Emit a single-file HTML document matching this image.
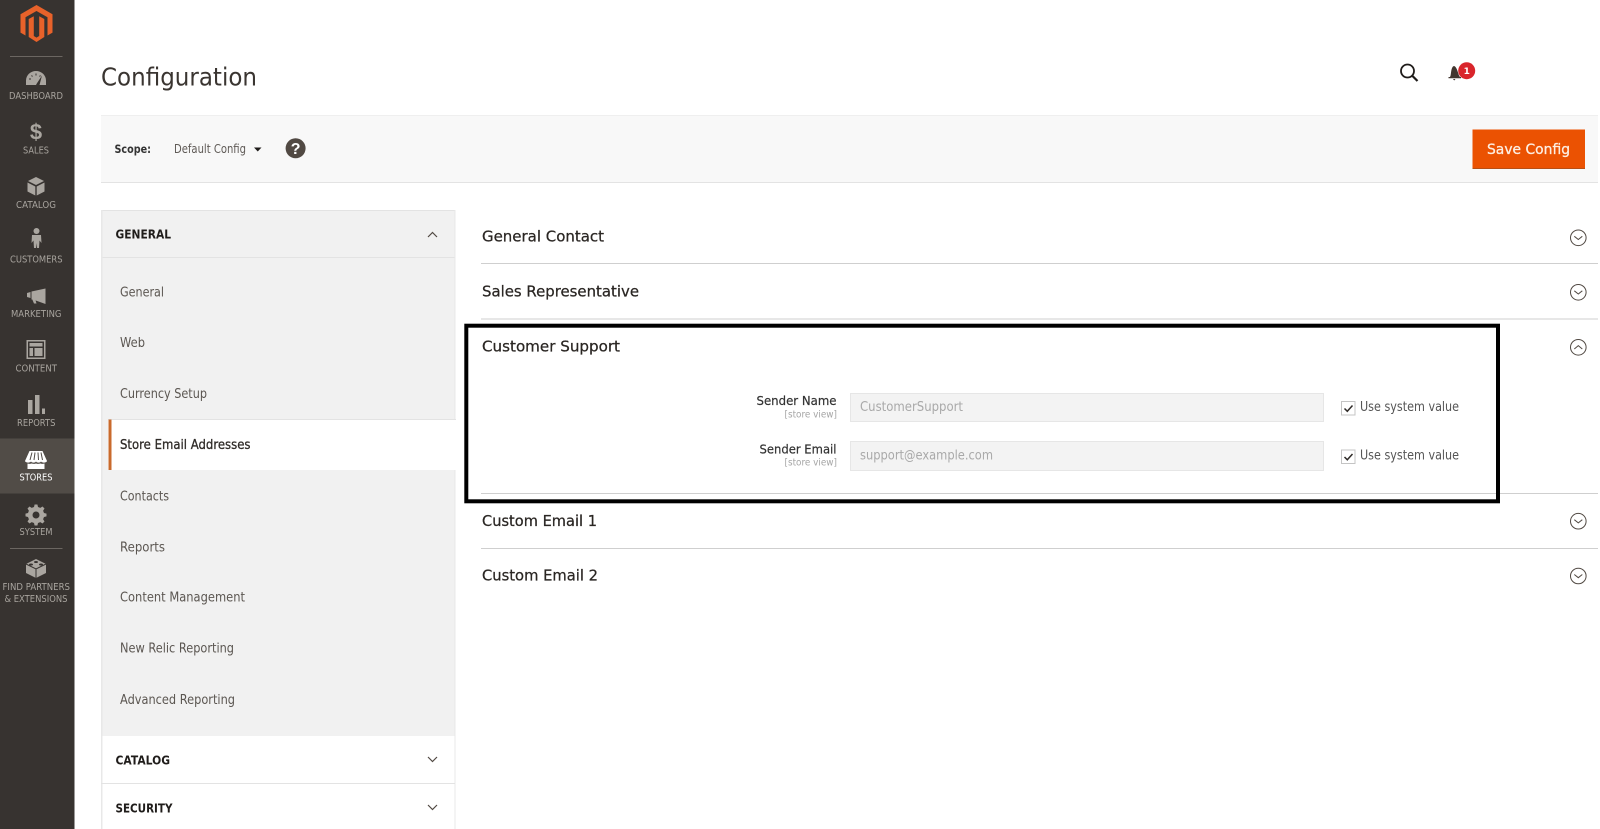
<!DOCTYPE html>
<html lang="en">
<head>
<meta charset="utf-8">
<title>Configuration</title>
<style>
html,body{margin:0;padding:0;background:#fff;overflow:hidden}
svg{display:block;filter:blur(.3px)}
text{font-family:"DejaVu Sans","Liberation Sans",sans-serif;white-space:pre}
.nav{font-size:10px;fill:#a8a49e;text-anchor:start}
.menu{font-size:13.5px;fill:#5b5651}
.head{font-size:12.5px;font-weight:700;fill:#1f1c1a}
.sec{font-size:15px;fill:#2a2623;stroke:#2a2623;stroke-width:.25px}
.lab{font-size:12.5px;fill:#333;stroke:#333;stroke-width:.2px}
.sv{font-size:9.5px;fill:#a5a5a5}
.ph{font-size:13px;fill:#a9a9a9}
.use{font-size:13px;fill:#555}
.ic{fill:#aaa6a0}
</style>
</head>
<body>
<svg xmlns="http://www.w3.org/2000/svg" width="1600" height="829" viewBox="0 0 1600 829">
<rect width="1600" height="829" fill="#fff"/>

<!-- Sidebar -->
<rect x="0" y="0" width="74.5" height="829" fill="#373330"/>
<rect x="0" y="438.5" width="74.5" height="55" fill="#514c47"/>
<rect x="10" y="56" width="52.500" height="1" fill="#6b6661"/>
<rect x="10" y="548" width="52.500" height="1" fill="#6b6661"/>

<!-- Logo -->
<path fill="#e8622a" d="M36.500 5 52.500 14.200V32.600L47.500 35.500V17.200L36.500 11 25.500 17.200V35.500L20.500 32.600V14.200Z"/>
<path fill="#e8622a" d="M28.700 19 33.800 16.200V36L36.500 37.600 39.200 36V16.200L44.300 19V37L36.500 42 28.700 37Z"/>

<!-- Dashboard -->
<path class="ic" d="M26 85V80.500A10 9.500 0 0 1 46 80.500V85H39.500L42 75.500 36.800 83.500 36 85Z"/>
<path d="M29 79h2M31.500 75.500l1 1M36 73.500v2M40.500 75.500l-1 1" stroke="#373330" stroke-width="1"/>
<text class="nav" x="9" y="99" textLength="54" lengthAdjust="spacingAndGlyphs">DASHBOARD</text>

<!-- Sales -->
<text x="36" y="139.500" text-anchor="middle" style="font-family:'Liberation Sans',sans-serif;font-size:22px;font-weight:700;fill:#aaa6a0">$</text>
<text class="nav" x="23" y="153.500" textLength="26" lengthAdjust="spacingAndGlyphs">SALES</text>

<!-- Catalog -->
<path class="ic" d="M36 177 44 181 36 185 28 181ZM27.500 182.500 35.300 186.500V195.500L27.500 191.500ZM44.500 182.500 36.700 186.500V195.500L44.500 191.500Z"/>
<text class="nav" x="16" y="208" textLength="40" lengthAdjust="spacingAndGlyphs">CATALOG</text>

<!-- Customers -->
<circle class="ic" cx="36.500" cy="231" r="3"/>
<path class="ic" d="M32 235H41L41.500 243 39.500 240.500 39 248H37L36.500 243 36 248H34L33.500 240.500 31.500 243Z"/>
<text class="nav" x="10" y="262.500" textLength="52.500" lengthAdjust="spacingAndGlyphs">CUSTOMERS</text>

<!-- Marketing -->
<path class="ic" d="M27 293 30.500 292V298L27 297ZM31.500 291.500 45.500 288.500V304L31.500 299V298.800L35.500 300.300 36.500 303.500H34L32.300 299.500H31.500Z"/>
<text class="nav" x="11" y="317" textLength="50.500" lengthAdjust="spacingAndGlyphs">MARKETING</text>

<!-- Content -->
<path fill-rule="evenodd" class="ic" d="M26.500 340H45.500V359H26.500ZM28 341.500V357.500H44V341.500Z"/>
<path class="ic" d="M29.500 343H42.500V346.500H29.500ZM29.500 348H33V356H29.500ZM34.500 348H42.500V356H34.500Z"/>
<text class="nav" x="15.500" y="371.500" textLength="41.500" lengthAdjust="spacingAndGlyphs">CONTENT</text>

<!-- Reports -->
<path class="ic" d="M28 400H32.500V414H28ZM35 395H39.500V414H35ZM42 408.500H45V414H42Z"/>
<text class="nav" x="17" y="426" textLength="38.500" lengthAdjust="spacingAndGlyphs">REPORTS</text>

<!-- Stores -->
<path fill="#fff" d="M29.500 451H42.500L47 461C46.500 463 42 463 41 461.500 40 463 37 463 36 461.500 35 463 32 463 31 461.500 30 463 25.500 463 25 461ZM27.500 463.500C29 464 30.500 464 31.500 463.500 33 464 35 464 36 463.500 37 464 39 464 40.500 463.500 41.500 464 43 464 44.500 463.500V469H27.500Z"/>
<path d="M32 452.500 30 460M35 452.500 34 460M38 452.500 38.500 460M41 452.500 42.500 460" stroke="#514c47" stroke-width="1"/>
<text class="nav" x="19.500" y="480.500" textLength="33" lengthAdjust="spacingAndGlyphs" style="fill:#fff">STORES</text>

<!-- System -->
<path class="ic" fill-rule="evenodd" d="M34.600 504.500H37.400L38 507 40.300 507.900 42.500 506.500 44.500 508.500 43.100 510.700 44 513 46.500 513.600V516.400L44 517 43.100 519.300 44.500 521.500 42.500 523.500 40.300 522.100 38 523 37.400 525.500H34.600L34 523 31.700 522.100 29.500 523.500 27.500 521.500 28.900 519.300 28 517 25.500 516.400V513.600L28 513 28.900 510.700 27.500 508.500 29.500 506.500 31.700 507.900 34 507ZM36 511.500A3.500 3.500 0 1 0 36 518.500 3.500 3.500 0 0 0 36 511.500Z"/>
<text class="nav" x="19.500" y="535" textLength="33" lengthAdjust="spacingAndGlyphs">SYSTEM</text>

<!-- Partners -->
<path class="ic" d="M36 559 46 564V573L36 578 26 573V564Z"/>
<path d="M26 564 36 569 46 564M36 569V578" stroke="#373330" stroke-width="1" fill="none"/>
<ellipse cx="36" cy="562" rx="2" ry="1" fill="#373330"/>
<ellipse cx="31" cy="564.500" rx="2" ry="1" fill="#373330"/>
<ellipse cx="41" cy="564.500" rx="2" ry="1" fill="#373330"/>
<text class="nav" x="2.500" y="590" textLength="67.500" lengthAdjust="spacingAndGlyphs">FIND PARTNERS</text>
<text class="nav" x="4.500" y="602" textLength="63" lengthAdjust="spacingAndGlyphs">&amp; EXTENSIONS</text>

<!-- Title -->
<text x="101" y="85.500" textLength="156" lengthAdjust="spacingAndGlyphs" style="font-size:25px;fill:#3a3531">Configuration</text>

<!-- Header actions -->
<circle cx="1407.500" cy="71" r="6.500" fill="none" stroke="#1f1c1a" stroke-width="1.800"/>
<path d="M1412.500 76 1417.500 81" stroke="#1f1c1a" stroke-width="2.200"/>
<path fill="#41362f" d="M1450 77C1451.500 75 1450.500 67 1454 66 1457.500 67 1458 75 1460 77ZM1448.500 77H1461V78.300H1448.500ZM1453 79H1455.500L1454.200 80.500Z"/>
<circle cx="1466.700" cy="70.700" r="8.500" fill="#d9252b"/>
<text x="1466.700" y="74" text-anchor="middle" style="font-size:9px;font-weight:700;fill:#fff">1</text>

<!-- Scope bar -->
<rect x="101" y="115" width="1497" height="67" fill="#f8f8f8"/>
<rect x="101" y="115" width="1497" height="1" fill="#efefef"/>
<rect x="101" y="182" width="1497" height="1" fill="#e3e3e3"/>
<text x="114.500" y="153" textLength="36.500" lengthAdjust="spacingAndGlyphs" style="font-size:11.500px;font-weight:700;fill:#333">Scope:</text>
<text x="174" y="153" textLength="72" lengthAdjust="spacingAndGlyphs" style="font-size:12px;fill:#5f5a56">Default Config</text>
<path d="M254 147.500H261.500L257.750 151.500Z" fill="#1f1c1a"/>
<circle cx="295.600" cy="148.300" r="10" fill="#514943"/>
<text x="295.600" y="154" text-anchor="middle" style="font-family:'Liberation Sans',sans-serif;font-size:16px;font-weight:700;fill:#fff">?</text>
<rect x="1472.500" y="129.500" width="112.500" height="39.500" fill="#eb5202"/>
<rect x="1472.500" y="168" width="112.500" height="1" fill="#b84f14"/>
<text x="1487" y="154" textLength="83" lengthAdjust="spacingAndGlyphs" style="font-size:14px;fill:#fdeee2;stroke:#fdeee2;stroke-width:.3px">Save Config</text>

<!-- Left panel -->
<rect x="101" y="210" width="354" height="526" fill="#f1f1f1"/>
<rect x="101" y="210" width="354" height="1" fill="#e3e3e3"/>
<rect x="101" y="257" width="354" height="1" fill="#e3e3e3"/>
<rect x="101" y="210" width="1.500" height="619" fill="#e8e8e8"/>
<rect x="454.500" y="210" width="1" height="619" fill="#e8e8e8"/>
<text class="head" x="115.500" y="238.700" textLength="55.500" lengthAdjust="spacingAndGlyphs">GENERAL</text>
<path d="M428 237 432.500 232.500 437 237" fill="none" stroke="#514943" stroke-width="1.200"/>

<rect x="108" y="419" width="348" height="51" fill="#fff"/>
<rect x="108" y="419" width="348" height="1" fill="#e3e3e3"/>
<rect x="108.500" y="419.500" width="3" height="50.500" fill="#c96a2c"/>

<text class="menu" x="120" y="296.500" textLength="44" lengthAdjust="spacingAndGlyphs">General</text>
<text class="menu" x="120" y="347" textLength="25" lengthAdjust="spacingAndGlyphs">Web</text>
<text class="menu" x="120" y="397.800" textLength="87" lengthAdjust="spacingAndGlyphs">Currency Setup</text>
<text class="menu" x="120" y="449" textLength="130.500" lengthAdjust="spacingAndGlyphs" style="fill:#2f2b28;stroke:#2f2b28;stroke-width:.3px">Store Email Addresses</text>
<text class="menu" x="120" y="500.500" textLength="49" lengthAdjust="spacingAndGlyphs">Contacts</text>
<text class="menu" x="120" y="551.500" textLength="45" lengthAdjust="spacingAndGlyphs">Reports</text>
<text class="menu" x="120" y="601.500" textLength="125" lengthAdjust="spacingAndGlyphs">Content Management</text>
<text class="menu" x="120" y="652.500" textLength="114" lengthAdjust="spacingAndGlyphs">New Relic Reporting</text>
<text class="menu" x="120" y="703.800" textLength="115" lengthAdjust="spacingAndGlyphs">Advanced Reporting</text>

<text class="head" x="115.500" y="764.500" textLength="54.500" lengthAdjust="spacingAndGlyphs">CATALOG</text>
<path d="M428 757 432.500 761.500 437 757" fill="none" stroke="#514943" stroke-width="1.200"/>
<rect x="101" y="783" width="354" height="1" fill="#e3e3e3"/>
<text class="head" x="115.500" y="812.500" textLength="57" lengthAdjust="spacingAndGlyphs">SECURITY</text>
<path d="M428 805 432.500 809.500 437 805" fill="none" stroke="#514943" stroke-width="1.200"/>

<!-- Sections -->
<text class="sec" x="482" y="241.700" textLength="122" lengthAdjust="spacingAndGlyphs">General Contact</text>
<rect x="481" y="263" width="1117" height="1" fill="#cfcfcf"/>
<text class="sec" x="482" y="296.700" textLength="157" lengthAdjust="spacingAndGlyphs">Sales Representative</text>
<rect x="481" y="318.500" width="1117" height="1" fill="#cfcfcf"/>
<text class="sec" x="482" y="351.700" textLength="138" lengthAdjust="spacingAndGlyphs">Customer Support</text>
<rect x="481" y="493" width="1117" height="1" fill="#cfcfcf"/>
<text class="sec" x="482" y="526.200" textLength="115" lengthAdjust="spacingAndGlyphs">Custom Email 1</text>
<rect x="481" y="548" width="1117" height="1" fill="#cfcfcf"/>
<text class="sec" x="482" y="580.500" textLength="116" lengthAdjust="spacingAndGlyphs">Custom Email 2</text>

<!-- Section toggles -->
<g fill="none" stroke="#514943" stroke-width="1">
<circle cx="1578.300" cy="237.800" r="7.800"/>
<path d="M1574.300 236.300 1578.300 239.500 1582.300 236.300"/>
<circle cx="1578.300" cy="292.300" r="7.800"/>
<path d="M1574.300 290.800 1578.300 294 1582.300 290.800"/>
<circle cx="1578.300" cy="347.300" r="7.800"/>
<path d="M1574.300 349 1578.300 345.600 1582.300 349"/>
<circle cx="1578.300" cy="521.200" r="7.800"/>
<path d="M1574.300 519.700 1578.300 522.900 1582.300 519.700"/>
<circle cx="1578.300" cy="576" r="7.800"/>
<path d="M1574.300 574.500 1578.300 577.700 1582.300 574.500"/>
</g>

<!-- Fields -->
<text class="lab" x="756.500" y="405" textLength="80" lengthAdjust="spacingAndGlyphs">Sender Name</text>
<text class="sv" x="784.500" y="417.500" textLength="52.500" lengthAdjust="spacingAndGlyphs">[store view]</text>
<rect x="850.500" y="393.500" width="473" height="28" fill="#f3f3f3" stroke="#e6e6e6"/>
<text class="ph" x="860" y="411" textLength="103" lengthAdjust="spacingAndGlyphs">CustomerSupport</text>
<rect x="1341.500" y="401.500" width="13.500" height="13.500" fill="#fff" stroke="#c4c4c4"/>
<path d="M1344.500 408.500 1347.300 411.300 1352.500 405.500" fill="none" stroke="#2f2b28" stroke-width="1.500"/>
<text class="use" x="1360" y="411" textLength="99" lengthAdjust="spacingAndGlyphs">Use system value</text>

<text class="lab" x="759.500" y="453.300" textLength="77" lengthAdjust="spacingAndGlyphs">Sender Email</text>
<text class="sv" x="784.500" y="465.700" textLength="52.500" lengthAdjust="spacingAndGlyphs">[store view]</text>
<rect x="850.500" y="441.500" width="473" height="29" fill="#f3f3f3" stroke="#e6e6e6"/>
<text class="ph" x="860" y="459.500" textLength="133" lengthAdjust="spacingAndGlyphs">support@example.com</text>
<rect x="1341.500" y="450" width="13.500" height="13.500" fill="#fff" stroke="#c4c4c4"/>
<path d="M1344.500 457 1347.300 459.800 1352.500 454" fill="none" stroke="#2f2b28" stroke-width="1.500"/>
<text class="use" x="1360" y="459.300" textLength="99" lengthAdjust="spacingAndGlyphs">Use system value</text>

<!-- Highlight box -->
<rect x="466.300" y="325.700" width="1031.700" height="175.600" fill="none" stroke="#000" stroke-width="4"/>
</svg>
</body>
</html>
